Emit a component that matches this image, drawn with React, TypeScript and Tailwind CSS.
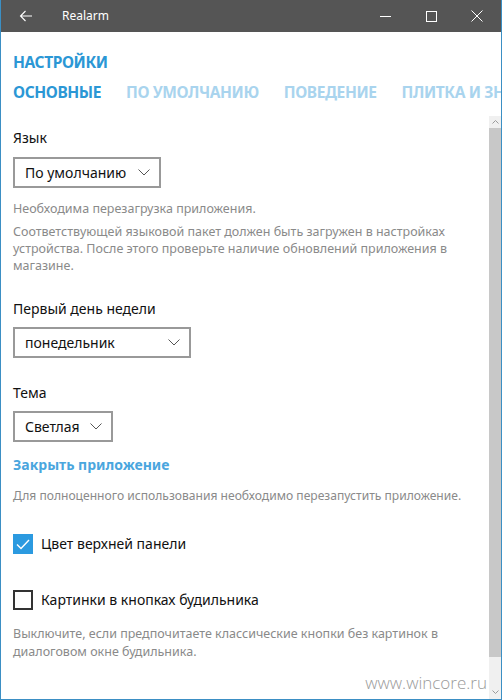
import React from "react";

const font = { fontFamily: '"Noto Sans", "Open Sans", sans-serif' };

function Chevron() {
  return (
    <svg width="12" height="7" viewBox="0 0 12 7" className="shrink-0">
      <path d="M0.5 0.5 L6 6 L11.5 0.5" fill="none" stroke="#555" strokeWidth="1" />
    </svg>
  );
}

function Dropdown({ text, width }: { text: string; width: string }) {
  return (
    <div className={`h-[31px] ${width} border-2 border-[#999999] flex items-center justify-between pl-[10px] pr-[9px]`}>
      <span className="text-[14px] text-[#111] leading-[20px]">{text}</span>
      <Chevron />
    </div>
  );
}

export default function App() {
  return (
    <div className="w-[502px] h-[700px] border-x border-b border-[#3b8fc4] flex flex-col bg-white overflow-hidden relative" style={font}>
      {/* title bar */}
      <div className="h-[32px] bg-[#555555] flex items-center shrink-0 relative">
        <svg width="14" height="12" viewBox="0 0 14 12" className="ml-[18px]">
          <path d="M13 6 H1.5 M6.5 1 L1.5 6 L6.5 11" fill="none" stroke="#fff" strokeWidth="1.1" />
        </svg>
        <span className="ml-[29px] text-[12px] text-white leading-[16px]">Realarm</span>
        <div className="ml-auto flex items-center h-full">
          <div className="w-[46px] flex justify-center">
            <div className="w-[11px] h-px bg-white" />
          </div>
          <div className="w-[46px] flex justify-center">
            <div className="w-[11px] h-[11px] border border-white" />
          </div>
          <div className="w-[46px] flex justify-center mr-[1px]">
            <svg width="12" height="12" viewBox="0 0 12 12">
              <path d="M0.5 0.5 L11.5 11.5 M11.5 0.5 L0.5 11.5" fill="none" stroke="#fff" strokeWidth="1" />
            </svg>
          </div>
        </div>
      </div>

      {/* header */}
      <div className="pl-3 shrink-0">
        <div className="mt-[18px] h-[24px] leading-[24px] text-[15.5px] font-bold text-[#2b97d5] tracking-[-0.4px]">НАСТРОЙКИ</div>
        <div className="mt-[6px] h-[24px] flex whitespace-nowrap text-[15.5px] font-bold leading-[24px] tracking-[-0.4px] overflow-hidden">
          <span className="text-[#2b97d5] shrink-0">ОСНОВНЫЕ</span>
          <span className="ml-[25px] text-[#a9d4ee] shrink-0">ПО УМОЛЧАНИЮ</span>
          <span className="ml-[25px] text-[#a9d4ee] shrink-0">ПОВЕДЕНИЕ</span>
          <span className="ml-[25px] text-[#a9d4ee] shrink-0">ПЛИТКА И ЗНАЧКИ</span>
        </div>
      </div>

      {/* body */}
      <div className="mt-[12px] flex flex-1 min-h-0">
        <div className="flex-1 min-w-0 pl-3 flex flex-col">
          <div className="mt-[12px] h-[20px] leading-[20px] text-[14px] text-[#111]">Язык</div>
          <div className="mt-[9px]">
            <Dropdown text="По умолчанию" width="w-[148px]" />
          </div>
          <div className="mt-[12px] text-[12.5px] leading-[17px] text-[#8a8a8a]">Необходима перезагрузка приложения.</div>
          <div className="mt-[6px] text-[12.5px] leading-[17px] text-[#8a8a8a] pr-[16px]">
            Соответствующей языковой пакет должен быть загружен в настройках устройства. После этого проверьте наличие обновлений приложения в магазине.
          </div>
          <div className="mt-[25px] h-[20px] leading-[20px] text-[14px] text-[#111]">Первый день недели</div>
          <div className="mt-[8px]">
            <Dropdown text="понедельник" width="w-[178px]" />
          </div>
          <div className="mt-[25px] h-[20px] leading-[20px] text-[14px] text-[#111]">Тема</div>
          <div className="mt-[8px]">
            <Dropdown text="Светлая" width="w-[100px]" />
          </div>
          <div className="mt-[13px] h-[20px] leading-[20px] text-[14px] font-bold text-[#4aa6de]">Закрыть приложение</div>
          <div className="mt-[12px] text-[12.1px] leading-[17px] text-[#8a8a8a] whitespace-nowrap">
            Для полноценного использования необходимо перезапустить приложение.
          </div>
          <div className="mt-[30px] flex items-center gap-[8px]">
            <div className="w-[20px] h-[20px] bg-[#2b9ae0] flex items-center justify-center">
              <svg width="14" height="11" viewBox="0 0 14 11">
                <path d="M1 5.5 L5 9.5 L13 1" fill="none" stroke="#fff" strokeWidth="1.4" />
              </svg>
            </div>
            <span className="text-[14px] leading-[20px] text-[#111]">Цвет верхней панели</span>
          </div>
          <div className="mt-[36px] flex items-center gap-[8px]">
            <div className="w-[20px] h-[20px] border-2 border-[#333]" />
            <span className="text-[14px] leading-[20px] text-[#111]">Картинки в кнопках будильника</span>
          </div>
          <div className="mt-[15px] text-[12.5px] leading-[18px] text-[#8a8a8a] pr-[16px]">
            Выключите, если предпочитаете классические кнопки без картинок в диалоговом окне будильника.
          </div>
        </div>

        {/* scrollbar */}
        <div className="w-[12px] bg-[#f0f0f0] flex flex-col shrink-0">
          <div className="h-[12px] flex items-center justify-center">
            <svg width="7" height="4" viewBox="0 0 7 4">
              <path d="M0.5 3.5 L3.5 0.5 L6.5 3.5" fill="none" stroke="#9a9a9a" strokeWidth="1" />
            </svg>
          </div>
          <div className="h-[529px] bg-[#c8c8c8]" />
          <div className="flex-1 flex items-end justify-center pb-[5px]">
            <svg width="7" height="4" viewBox="0 0 7 4">
              <path d="M0.5 0.5 L3.5 3.5 L6.5 0.5" fill="none" stroke="#9a9a9a" strokeWidth="1" />
            </svg>
          </div>
        </div>
      </div>

      <div className="absolute right-[14px] bottom-[5px] text-[17px] leading-[22px] text-[#9a9a9a] font-light" style={{ fontFamily: '"Open Sans", sans-serif' }}>
        www.wincore.ru
      </div>
    </div>
  );
}
